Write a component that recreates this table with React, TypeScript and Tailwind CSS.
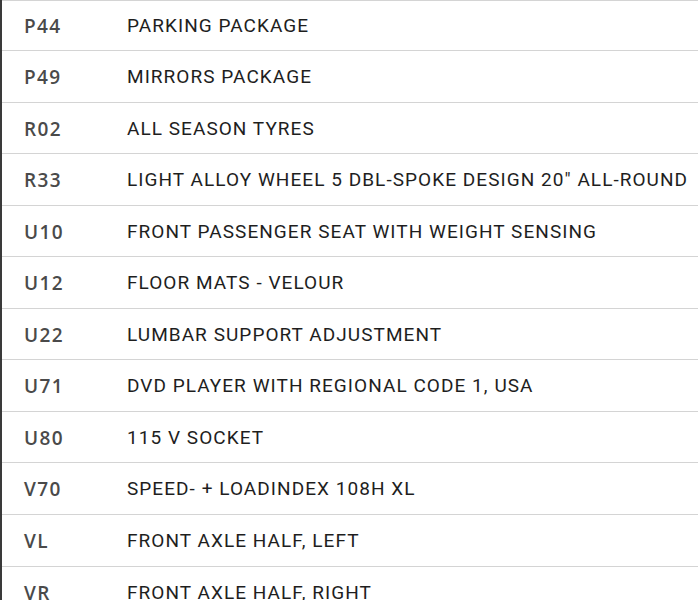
import React from "react";

const rows: [string, string][] = [
  ["P44", "PARKING PACKAGE"],
  ["P49", "MIRRORS PACKAGE"],
  ["R02", "ALL SEASON TYRES"],
  ["R33", 'LIGHT ALLOY WHEEL 5 DBL-SPOKE DESIGN 20" ALL-ROUND'],
  ["U10", "FRONT PASSENGER SEAT WITH WEIGHT SENSING"],
  ["U12", "FLOOR MATS - VELOUR"],
  ["U22", "LUMBAR SUPPORT ADJUSTMENT"],
  ["U71", "DVD PLAYER WITH REGIONAL CODE 1, USA"],
  ["U80", "115 V SOCKET"],
  ["V70", "SPEED- + LOADINDEX 108H XL"],
  ["VL", "FRONT AXLE HALF, LEFT"],
  ["VR", "FRONT AXLE HALF, RIGHT"],
];

export default function App() {
  return (
    <div className="w-[698px] h-[600px] overflow-hidden bg-white">
      <div className="border-l-2 border-[#3a3a3a] -mt-[0.5px]">
        {rows.map(([code, desc], i) => (
          <div
            key={code}
            className={`flex items-center pt-[2px] h-[51.56px] border-b border-[#d4d4d4] ${i === 0 ? "border-t" : ""}`}
          >
            <div
              className="w-[125px] shrink-0 pl-[22px] text-[19px] font-semibold tracking-[1.4px] text-[#4a4a4a]"
              style={{ fontFamily: '"Open Sans", sans-serif' }}
            >
              {code}
            </div>
            <div
              className="text-[19px] tracking-[1.05px] text-[#1e1e1e] whitespace-nowrap"
              style={{ fontFamily: "Roboto, sans-serif" }}
            >
              {desc}
            </div>
          </div>
        ))}
      </div>
    </div>
  );
}
